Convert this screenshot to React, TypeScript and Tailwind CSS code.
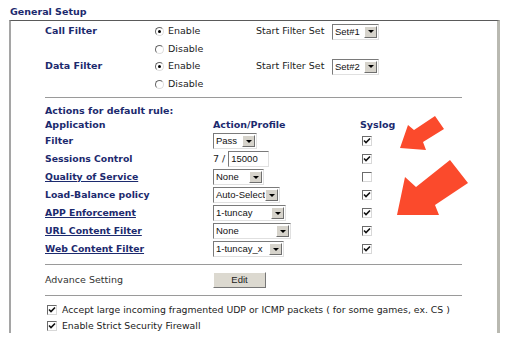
import React from "react";

const navy = "text-[#1c2a6e]";

function Select({ value, w }: { value: string; w: number }) {
  return (
    <div
      className="flex items-stretch h-[16px] bg-white border border-t-[#7a7a7a] border-l-[#7a7a7a] border-b-[#e0e0e0] border-r-[#e0e0e0]"
      style={{ width: w }}
    >
      <div className="flex-1 pl-[2px] leading-[14px] text-[9.5px] text-[#111] font-['Liberation_Sans',sans-serif] overflow-hidden whitespace-nowrap">
        {value}
      </div>
      <div className="w-[13px] my-[1px] mr-[1px] bg-[#d6d3cb] border border-t-white border-l-white border-b-[#6f6f6f] border-r-[#6f6f6f] flex items-center justify-center">
        <div className="w-0 h-0 border-l-[3px] border-r-[3px] border-t-[3px] border-l-transparent border-r-transparent border-t-black" />
      </div>
    </div>
  );
}

function Check({ on = true }: { on?: boolean }) {
  return (
    <div className="w-[10px] h-[10px] bg-white border border-t-[#6b6b6b] border-l-[#6b6b6b] border-b-[#d8d8d8] border-r-[#d8d8d8] flex items-center justify-center">
      {on && (
        <svg width="8" height="8" viewBox="0 0 8 8">
          <path d="M1 3.5 L3 5.5 L7 1.5" stroke="#111" strokeWidth="1.6" fill="none" />
        </svg>
      )}
    </div>
  );
}

function Radio({ on }: { on: boolean }) {
  return (
    <div className="w-[9px] h-[9px] rounded-full bg-white border border-t-[#666] border-l-[#666] border-b-[#ddd] border-r-[#ddd] flex items-center justify-center">
      {on && <div className="w-[3px] h-[3px] rounded-full bg-black" />}
    </div>
  );
}

function ActionRow({
  label,
  link,
  children,
  checked,
}: {
  label: string;
  link?: boolean;
  children: React.ReactNode;
  checked: boolean;
}) {
  return (
    <div className="flex items-center h-[18px]">
      <div className={`w-[168px] text-[9.3px] font-bold ${navy} ${link ? "underline" : ""}`}>{label}</div>
      <div className="w-[147px] flex items-center">{children}</div>
      <div className="pl-[2px]">
        <Check on={checked} />
      </div>
    </div>
  );
}

export default function App() {
  return (
    <div className="w-[506px] h-[351px] bg-white overflow-hidden relative font-['DejaVu_Sans',sans-serif]">
      <div className={`h-[20px] pl-[10px] pt-[6px] text-[9.5px] leading-[12px] font-bold ${navy}`}>General Setup</div>
      <div className="ml-[9px] w-[491px] h-[313px] border-t border-t-[#5a5a5a] border-l-2 border-l-[#a5a5a5] border-r-[3px] border-r-[#b9b9b1] pl-[34px] pt-[2px]">
        <div className="text-[9.5px]">
          {[
            { label: "Call Filter", set: "Set#1" },
            { label: "Data Filter", set: "Set#2" },
          ].map((f) => (
            <div key={f.label}>
              <div className="flex items-center h-[17px]">
                <div className={`w-[110px] font-bold ${navy}`}>{f.label}</div>
                <div className="w-[101px] flex items-center gap-[4px]">
                  <Radio on />
                  <span className="text-[#222]">Enable</span>
                </div>
                <span className="text-[#222] w-[76px]">Start Filter Set</span>
                <Select value={f.set} w={47} />
              </div>
              <div className="flex items-center h-[18px]">
                <div className="w-[110px]" />
                <div className="flex items-center gap-[4px]">
                  <Radio on={false} />
                  <span className="text-[#222]">Disable</span>
                </div>
              </div>
            </div>
          ))}
        </div>
        <div className="mt-[4px] w-[417px] border-t border-t-[#9a9a9a]" />
        <div className={`mt-[6px] h-[14px] text-[9.5px] font-bold ${navy} leading-[14px]`}>Actions for default rule:</div>
        <div className={`flex h-[14px] text-[9.5px] font-bold ${navy} leading-[14px]`}>
          <div className="w-[168px]">Application</div>
          <div className="w-[147px]">Action/Profile</div>
          <div>Syslog</div>
        </div>
        <ActionRow label="Filter" checked>
          <Select value="Pass" w={44} />
        </ActionRow>
        <ActionRow label="Sessions Control" checked>
          <span className="text-[9.5px] text-[#222] mr-[3px]">7 /</span>
          <div className="w-[41px] h-[16px] bg-white border border-t-[#7a7a7a] border-l-[#7a7a7a] border-b-[#e0e0e0] border-r-[#e0e0e0] pl-[2px] text-[9.5px] leading-[14px] font-['Liberation_Sans',sans-serif] text-[#111]">
            15000
          </div>
        </ActionRow>
        <ActionRow label="Quality of Service" link checked={false}>
          <Select value="None" w={51} />
        </ActionRow>
        <ActionRow label="Load-Balance policy" checked>
          <Select value="Auto-Select" w={67} />
        </ActionRow>
        <ActionRow label="APP Enforcement" link checked>
          <Select value="1-tuncay" w={73} />
        </ActionRow>
        <ActionRow label="URL Content Filter" link checked>
          <Select value="None" w={78} />
        </ActionRow>
        <ActionRow label="Web Content Filter" link checked>
          <Select value="1-tuncay_x" w={71} />
        </ActionRow>
        <div className="mt-[6px] w-[417px] border-t border-t-[#9a9a9a]" />
        <div className="mt-[6px] flex items-center h-[18px]">
          <div className="w-[168px] text-[9.5px] text-[#333]">Advance Setting</div>
          <div className="w-[53px] h-[16px] bg-[#dcd9d0] border border-t-white border-l-white border-b-[#777] border-r-[#777] flex items-center justify-center text-[9.5px] text-[#222] font-['Liberation_Sans',sans-serif]">
            Edit
          </div>
        </div>
        <div className="mt-[6px] w-[417px] border-t border-t-[#9a9a9a]" />
        <div className="mt-[6px] pl-[2px] text-[9.3px] text-[#222]">
          <div className="flex items-center h-[16px] gap-[5px]">
            <Check />
            <span>Accept large incoming fragmented UDP or ICMP packets ( for some games, ex. CS )</span>
          </div>
          <div className="flex items-center h-[16px] gap-[5px]">
            <Check />
            <span>Enable Strict Security Firewall</span>
          </div>
        </div>
      </div>
      <svg className="absolute left-0 top-0 pointer-events-none" width="506" height="351">
        <polygon points="400,148 408,125 414,130 435,116 444,129 423,142 426,150" fill="#fb4a2c" />
        <polygon points="397,215 405,177 416,187 450,160 468,183 435,205 439,215" fill="#fb4a2c" />
      </svg>
    </div>
  );
}
